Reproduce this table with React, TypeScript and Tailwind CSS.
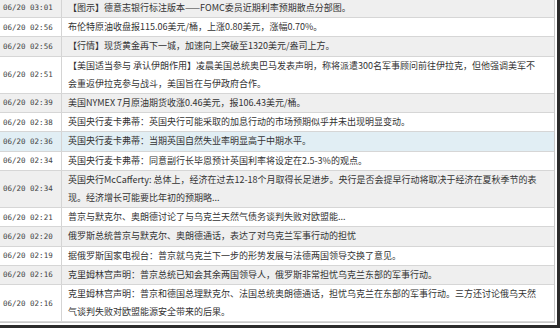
import React from 'react';

type NewsRow = {
  time: string;
  lines: string[];
  tone: 'gray' | 'white' | 'blue';
};

const NEWS: NewsRow[] = [
  { time: '06/20 03:01', tone: 'gray', lines: ['【图示】德意志银行标注版本——FOMC委员近期利率预期散点分部图。'] },
  { time: '06/20 02:56', tone: 'white', lines: ['布伦特原油收盘报115.06美元/桶，上涨0.80美元，涨幅0.70%。'] },
  { time: '06/20 02:56', tone: 'gray', lines: ['【行情】现货黄金再下一城，加速向上突破至1320美元/盎司上方。'] },
  {
    time: '06/20 02:51',
    tone: 'white',
    lines: [
      '【美国适当参与 承认伊朗作用】凌晨美国总统奥巴马发表声明，称将派遣300名军事顾问前往伊拉克，但他强调美军不',
      '会重返伊拉克参与战斗，美国旨在与伊政府合作。',
    ],
  },
  { time: '06/20 02:39', tone: 'gray', lines: ['美国NYMEX 7月原油期货收涨0.46美元，报106.43美元/桶。'] },
  { time: '06/20 02:38', tone: 'white', lines: ['英国央行麦卡弗蒂：英国央行可能采取的加息行动的市场预期似乎并未出现明显变动。'] },
  { time: '06/20 02:36', tone: 'blue', lines: ['英国央行麦卡弗蒂：当期英国自然失业率明显高于中期水平。'] },
  { time: '06/20 02:34', tone: 'white', lines: ['英国央行麦卡弗蒂：同意副行长毕恩预计英国利率将设定在2.5-3%的观点。'] },
  {
    time: '06/20 02:34',
    tone: 'gray',
    lines: [
      '英国央行McCafferty: 总体上，经济在过去12-18个月取得长足进步。央行是否会提早行动将取决于经济在夏秋季节的表',
      '现。经济增长可能要比年初的预期略...',
    ],
  },
  { time: '06/20 02:21', tone: 'white', lines: ['普京与默克尔、奥朗德讨论了与乌克兰天然气债务谈判失败对欧盟能...'] },
  { time: '06/20 02:20', tone: 'gray', lines: ['俄罗斯总统普京与默克尔、奥朗德通话，表达了对乌克兰军事行动的担忧'] },
  { time: '06/20 02:19', tone: 'white', lines: ['据俄罗斯国家电视台：普京就乌克兰下一步的形势发展与法德两国领导交换了意见。'] },
  { time: '06/20 02:16', tone: 'gray', lines: ['克里姆林宫声明：普京总统已知会其余两国领导人，俄罗斯非常担忧乌克兰东部的军事行动。'] },
  {
    time: '06/20 02:16',
    tone: 'white',
    lines: [
      '克里姆林宫声明：普京和德国总理默克尔、法国总统奥朗德通话，担忧乌克兰在东部的军事行动。三方还讨论俄乌天然',
      '气谈判失败对欧盟能源安全带来的后果。',
    ],
  },
];

const toneClass = (tone: NewsRow['tone']) =>
  tone === 'gray' ? 'bg-[#efefef]' : tone === 'blue' ? 'bg-[#e1eef4]' : 'bg-white';

const Row: React.FC<{ row: NewsRow }> = ({ row }) => (
  <div className={`flex border-b border-[#d6d6d6] ${toneClass(row.tone)}`}>
    <div className="w-[62px] shrink-0 flex items-center pl-[3px] border-r border-[#d4d4d4] text-[7.5px] text-[#444] font-['DejaVu_Sans_Mono',monospace] whitespace-nowrap">
      {row.time}
    </div>
    <div className="flex-1 pl-[6px] text-[9px] leading-[18.2px] text-[#333] whitespace-nowrap overflow-hidden">
      {row.lines.map((line, i) => (
        <div key={i}>{line}</div>
      ))}
    </div>
  </div>
);

export default function App() {
  return (
    <div className="w-[560px] h-[328px] overflow-hidden bg-white border-r-[3px] border-b-[3px] border-[#2b2b2b] font-['Noto_Sans_CJK_SC',sans-serif]">
      <div className="h-full pr-[2px] pb-[2px] bg-white">
        <div className="h-full border-r border-b border-[#c8c8c8] overflow-hidden">
          <div className="-mt-[1px]">
            {NEWS.map((row, i) => (
              <Row key={i} row={row} />
            ))}
          </div>
        </div>
      </div>
    </div>
  );
}
